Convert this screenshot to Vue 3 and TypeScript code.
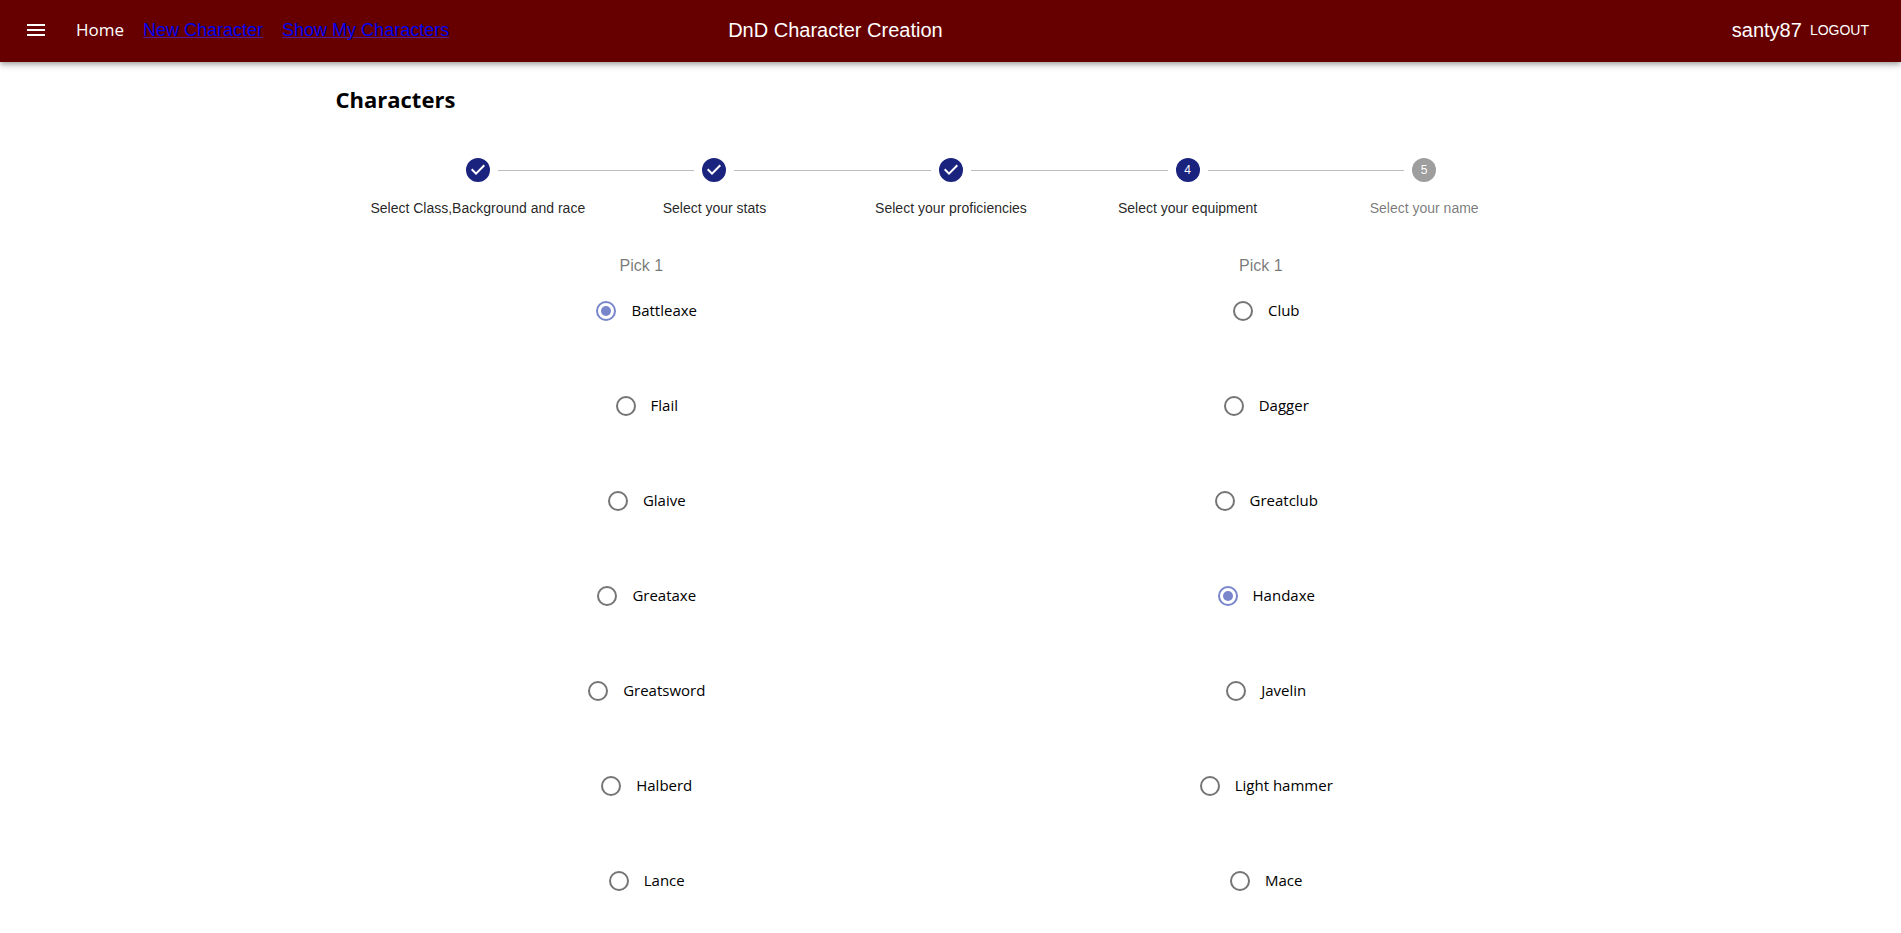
<script setup lang="ts">
import { reactive } from 'vue'

interface Step {
  label: string
  state: 'done' | 'active' | 'pending'
}

interface Choice {
  id: string
  pick: number
  options: string[]
}

const steps: Step[] = [
  { label: 'Select Class,Background and race', state: 'done' },
  { label: 'Select your stats', state: 'done' },
  { label: 'Select your proficiencies', state: 'done' },
  { label: 'Select your equipment', state: 'active' },
  { label: 'Select your name', state: 'pending' },
]

const choices: Choice[] = [
  {
    id: 'martial',
    pick: 1,
    options: ['Battleaxe', 'Flail', 'Glaive', 'Greataxe', 'Greatsword', 'Halberd', 'Lance'],
  },
  {
    id: 'simple',
    pick: 1,
    options: ['Club', 'Dagger', 'Greatclub', 'Handaxe', 'Javelin', 'Light hammer', 'Mace'],
  },
]

const selected = reactive<Record<string, string>>({ martial: 'Battleaxe', simple: 'Handaxe' })
</script>

<template>
  <header class="app-bar">
    <nav class="nav">
      <button class="menu-button" type="button" aria-label="Open menu">
        <svg viewBox="0 0 24 24" width="24" height="24" aria-hidden="true">
          <path d="M3 18h18v-2H3v2zm0-5h18v-2H3v2zm0-7v2h18V6H3z" fill="currentColor" />
        </svg>
      </button>
      <span class="home">Home</span>
      <a class="nav-link" href="#new">New Character</a>
      <a class="nav-link" href="#characters">Show My Characters</a>
    </nav>
    <span class="app-title">DnD Character Creation</span>
    <div class="account">
      <span>santy87</span>
      <button class="logout" type="button">LOGOUT</button>
    </div>
  </header>

  <main class="container">
    <h1 class="heading">Characters</h1>

    <ol class="stepper">
      <li v-for="(step, index) in steps" :key="step.label" class="step" :class="step.state">
        <div class="step-track">
          <span class="line" :class="{ hidden: index === 0 }"></span>
          <svg v-if="step.state === 'done'" class="step-icon" viewBox="0 0 24 24" aria-hidden="true">
            <path
              d="M12 0a12 12 0 1 0 0 24 12 12 0 0 0 0-24zm-2 17l-5-5 1.4-1.4 3.6 3.6 7.6-7.6L19 8l-9 9z"
              fill="currentColor"
            />
          </svg>
          <span v-else class="step-number">{{ index + 1 }}</span>
          <span class="line" :class="{ hidden: index === steps.length - 1 }"></span>
        </div>
        <span class="step-label">{{ step.label }}</span>
      </li>
    </ol>

    <div class="choices">
      <fieldset v-for="choice in choices" :key="choice.id" class="choice">
        <legend class="pick">Pick {{ choice.pick }}</legend>
        <div class="options">
          <label v-for="option in choice.options" :key="option" class="option">
            <input v-model="selected[choice.id]" class="radio" type="radio" :name="choice.id" :value="option" />
            <span class="option-text">{{ option }}</span>
          </label>
        </div>
      </fieldset>
    </div>
  </main>
</template>

<style>
body {
  margin: 0;
  background: #fff;
}
</style>

<style scoped>
.app-bar {
  box-sizing: border-box;
  display: grid;
  grid-template-columns: 38% 1fr auto;
  align-items: center;
  min-height: 62px;
  padding: 0 24px 2px;
  background: #660000;
  color: #fff;
  font: 20px/32px "Liberation Sans", Arial, sans-serif;
  box-shadow:
    0 2px 4px -1px rgba(0, 0, 0, 0.2),
    0 4px 5px rgba(0, 0, 0, 0.14),
    0 1px 10px rgba(0, 0, 0, 0.12);
}

.nav {
  display: flex;
  align-items: center;
  gap: 19px;
}

.menu-button {
  display: flex;
  margin-right: 9px;
  padding: 0;
  border: 0;
  background: none;
  color: inherit;
  cursor: pointer;
}

.home {
  font: 17px/32px "Open Sans", "Segoe UI", sans-serif;
}

.nav-link {
  font-size: 18px;
  color: #0000ee;
  text-decoration-color: #551a8b;
  text-decoration-thickness: 1px;
}

.account {
  display: flex;
  align-items: center;
}

.logout {
  padding: 6px 8px;
  border: 0;
  background: none;
  color: inherit;
  font: 14px/24px "Liberation Sans", Arial, sans-serif;
  cursor: pointer;
}

.container {
  box-sizing: border-box;
  max-width: 1280px;
  margin: 0 auto;
  padding: 0 24px 0 25px;
}

.heading {
  margin: 0;
  padding: 21px 0 19px;
  font: bold 22px/32px "Open Sans", "Segoe UI", sans-serif;
  color: #000;
}

.stepper {
  display: flex;
  margin: 0;
  padding: 24px;
  list-style: none;
  font: 14px/20px "Liberation Sans", Arial, sans-serif;
}

.step {
  flex: 1;
  color: #1a237e;
  text-align: center;
}

.step.pending {
  color: #9e9e9e;
}

.step-track {
  display: flex;
  align-items: center;
  gap: 8px;
  margin-bottom: 16px;
}

.step-icon,
.step-number {
  flex: none;
  width: 24px;
  height: 24px;
}

.step-number {
  border-radius: 50%;
  background: currentColor;
  font-size: 12px;
  line-height: 24px;
}

.step-number::first-line {
  color: #fff;
}

.line {
  flex: 1;
  height: 1px;
  background: #bdbdbd;
}

.line.hidden {
  visibility: hidden;
}

.step-label {
  color: rgba(0, 0, 0, 0.87);
}

.pending .step-label {
  color: rgba(0, 0, 0, 0.54);
}

.choices {
  display: grid;
  grid-template-columns: 1fr 1fr;
  margin: 0 -4px;
}

.choice {
  min-width: 0;
  margin: 0;
  padding: 0;
  border: 0;
}

.pick {
  width: 100%;
  padding: 12px 0;
  font: 16px/24px "Liberation Sans", Arial, sans-serif;
  color: rgba(0, 0, 0, 0.54);
  text-align: center;
}

.options {
  display: flex;
  flex-direction: column;
  align-items: center;
  gap: 53px;
}

.option {
  display: flex;
  align-items: center;
  gap: 15px;
  height: 42px;
  padding-left: 11px;
  font: 15px/24px "Open Sans", "Segoe UI", sans-serif;
  color: #000;
  cursor: pointer;
}

.radio {
  appearance: none;
  box-sizing: border-box;
  display: grid;
  place-items: center;
  width: 20px;
  height: 20px;
  margin: 0;
  border: 2px solid #757575;
  border-radius: 50%;
  cursor: pointer;
}

.radio:checked {
  border-color: #7986cb;
}

.radio:checked::before {
  content: "";
  width: 10px;
  height: 10px;
  border-radius: 50%;
  background: #7986cb;
}

.option-text {
  padding-bottom: 2px;
}
</style>
